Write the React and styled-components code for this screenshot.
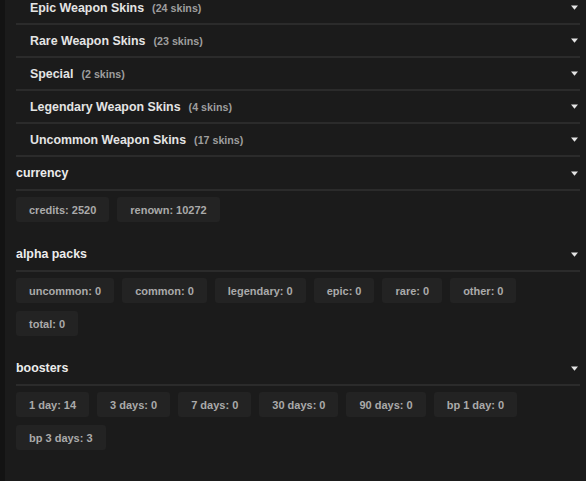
import React from 'react';
import styled, { createGlobalStyle } from 'styled-components';

const SKIN_GROUPS = [
  { name: 'Epic Weapon Skins', count: 24 },
  { name: 'Rare Weapon Skins', count: 23 },
  { name: 'Special', count: 2 },
  { name: 'Legendary Weapon Skins', count: 4 },
  { name: 'Uncommon Weapon Skins', count: 17 },
];

const SECTIONS = [
  { title: 'currency', items: ['credits: 2520', 'renown: 10272'] },
  {
    title: 'alpha packs',
    items: ['uncommon: 0', 'common: 0', 'legendary: 0', 'epic: 0', 'rare: 0', 'other: 0', 'total: 0'],
  },
  {
    title: 'boosters',
    items: ['1 day: 14', '3 days: 0', '7 days: 0', '30 days: 0', '90 days: 0', 'bp 1 day: 0', 'bp 3 days: 3'],
  },
];

const GlobalStyle = createGlobalStyle`
  html, body {
    margin: 0;
    padding: 0;
    background: #1b1b1b;
    overflow: hidden;
  }
  body {
    font-family: "Liberation Sans", Arial, sans-serif;
  }
`;

function Caret() {
  return (
    <CaretIcon width="7" height="5" viewBox="0 0 7 5">
      <path d="M0 0.5 H7 L3.5 4.8 Z" fill="#e4e4e4" />
    </CaretIcon>
  );
}

export default function App() {
  return (
    <>
      <GlobalStyle />
      <Page>
        <Strip />
        <Panel>
          <SkinList>
            {SKIN_GROUPS.map(group => (
              <SkinRow key={group.name}>
                <SkinLabel>
                  {group.name}
                  <SkinCount>({group.count} skins)</SkinCount>
                </SkinLabel>
                <Caret />
              </SkinRow>
            ))}
          </SkinList>

          {SECTIONS.map(section => (
            <Section key={section.title}>
              <SectionHeader>
                <SectionTitle>{section.title}</SectionTitle>
                <Caret />
              </SectionHeader>
              <ChipGrid>
                {section.items.map(item => (
                  <Chip key={item}>{item}</Chip>
                ))}
              </ChipGrid>
            </Section>
          ))}
        </Panel>
      </Page>
    </>
  );
}

const Page = styled.div`
  display: flex;
  min-height: calc(100vh + 8px);
  margin-top: -8px;
`;

const Strip = styled.div`
  width: 5px;
  flex-shrink: 0;
  background: #131313;
`;

const Panel = styled.div`
  flex: 1;
  padding: 0 6px 0 11px;
  background: #1b1b1b;
`;

const SkinList = styled.div`
  display: flex;
  flex-direction: column;
`;

const SkinRow = styled.div`
  display: flex;
  align-items: center;
  justify-content: space-between;
  height: 31px;
  padding: 0 2px 0 14px;
  border-bottom: 2px solid #2b2b2b;
`;

const SkinLabel = styled.span`
  font-size: 12.4px;
  font-weight: bold;
  color: #e4e4e4;
`;

const SkinCount = styled.span`
  margin-left: 8px;
  font-size: 10.7px;
  font-weight: bold;
  color: #9e9e9e;
`;

const CaretIcon = styled.svg`
  display: block;
  flex-shrink: 0;
`;

const Section = styled.section`
  display: flex;
  flex-direction: column;
`;

const SectionHeader = styled.div`
  display: flex;
  align-items: center;
  justify-content: space-between;
  height: 32px;
  padding-right: 2px;
  border-bottom: 2px solid #2b2b2b;
`;

const SectionTitle = styled.h3`
  margin: 0;
  font-size: 12.4px;
  font-weight: bold;
  color: #ececec;
`;

const ChipGrid = styled.div`
  display: flex;
  flex-wrap: wrap;
  gap: 8px;
  padding: 6px 0 16px;
  max-width: 540px;
`;

const Chip = styled.div`
  display: flex;
  align-items: center;
  height: 25px;
  padding: 0 13px;
  border-radius: 3px;
  background: #232323;
  font-size: 11px;
  font-weight: bold;
  color: #aaaaaa;
`;
